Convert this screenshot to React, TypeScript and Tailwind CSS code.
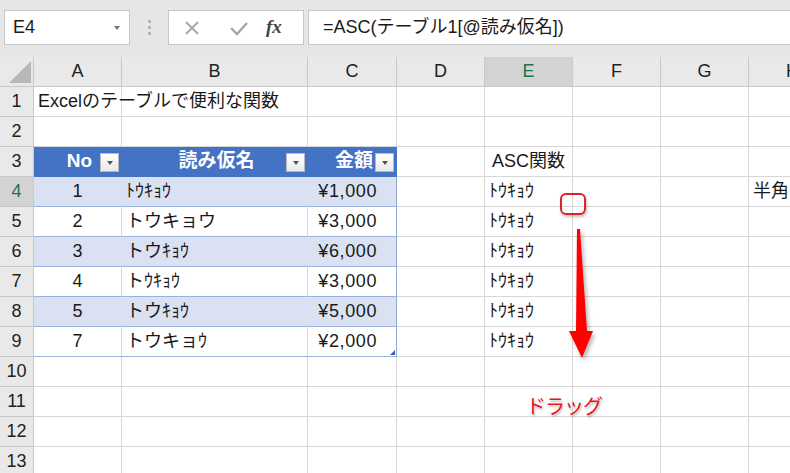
import React from "react";

const FONT = "font-['Liberation_Sans','Noto_Sans_CJK_JP',sans-serif]";
const GRID = "grid grid-cols-[34px_88px_186px_89px_88px_88px_88px_88px_88px]";
const COLS = ["A", "B", "C", "D", "E", "F", "G", "H"];

type Cell = { text?: string; align?: "left" | "center" | "right" };

const data: Record<number, Cell[]> = {
  1: [{ text: "Excelのテーブルで便利な関数" }],
  3: [{}, {}, {}, {}, { text: "ASC関数", align: "center" }],
  4: [{ text: "1", align: "center" }, { text: "ﾄｳｷｮｳ" }, { text: "¥1,000", align: "right" }, {}, { text: "ﾄｳｷｮｳ" }, {}, {}, { text: "半角" }],
  5: [{ text: "2", align: "center" }, { text: "トウキョウ" }, { text: "¥3,000", align: "right" }, {}, { text: "ﾄｳｷｮｳ" }],
  6: [{ text: "3", align: "center" }, { text: "トウｷｮｳ" }, { text: "¥6,000", align: "right" }, {}, { text: "ﾄｳｷｮｳ" }],
  7: [{ text: "4", align: "center" }, { text: "トｳｷｮｳ" }, { text: "¥3,000", align: "right" }, {}, { text: "ﾄｳｷｮｳ" }],
  8: [{ text: "5", align: "center" }, { text: "トウｷｮｳ" }, { text: "¥5,000", align: "right" }, {}, { text: "ﾄｳｷｮｳ" }],
  9: [{ text: "7", align: "center" }, { text: "トウキョｳ" }, { text: "¥2,000", align: "right" }, {}, { text: "ﾄｳｷｮｳ" }],
};

function FilterButton() {
  return (
    <span className="absolute right-[2px] top-[6px] flex h-[19px] w-[19px] items-center justify-center border border-[#b9b9b9] bg-gradient-to-b from-white to-[#e9e9e9]">
      <span className="h-0 w-0 border-x-[3.5px] border-t-[4px] border-x-transparent border-t-[#555]" />
    </span>
  );
}

function Row({ n }: { n: number }) {
  const cells = data[n] ?? [];
  const inTable = n >= 3 && n <= 9;
  const band = n === 4 || n === 6 || n === 8;
  return (
    <div className={`${GRID} h-[30px]`}>
      <div
        className={`flex items-center justify-center border-b border-r border-[#c8c8c8] ${
          n === 4 ? "bg-[#d3d3d3] text-[#217346]" : "bg-[#e9e9e9] text-[#222]"
        }`}
      >
        {n}
      </div>
      {COLS.map((c, i) => {
        const cell = cells[i] ?? {};
        const isTbl = inTable && i <= 2;
        let cls = "border-b border-r border-[#d6d6d6]";
        if (isTbl && n === 3) cls = "bg-[#4472c4] border-b border-b-[#4472c4] border-r border-r-[#4472c4] text-white font-bold text-[19px]";
        else if (isTbl) {
          cls = `border-b border-b-[#9bb2dd] border-r ${
            i === 2 ? "border-r-[#8ea9db]" : band ? "border-r-[#d9e1f2]" : "border-r-[#d6d6d6]"
          } ${band ? "bg-[#d9e1f2]" : ""}`;
        }
        const align =
          cell.align === "center"
            ? "justify-center"
            : cell.align === "right"
              ? "justify-end pr-[19px] tracking-[0.6px]"
              : "justify-start pl-[4px]";
        return (
          <div key={c} className={`relative flex items-center overflow-visible whitespace-nowrap ${cls} ${align}`}>
            {isTbl && n === 3 ? (
              <>
                {i === 0 && <span className="w-full text-center">No</span>}
                {i === 1 && <span className="w-full text-center">読み仮名</span>}
                {i === 2 && <span className="w-full pr-[23px] text-right">金額</span>}
                <FilterButton />
              </>
            ) : (
              <span className={n === 1 ? "relative z-10" : ""}>{cell.text}</span>
            )}
            {isTbl && n === 9 && i === 2 && (
              <span className="absolute bottom-[1px] right-[1px] h-0 w-0 border-l-[5px] border-t-[5px] border-r-[0px] border-l-transparent border-t-transparent border-b-[0px] border-r-[#3b5ca8] [border-right-width:5px] [border-right-style:solid]" />
            )}
          </div>
        );
      })}
    </div>
  );
}

export default function App() {
  return (
    <div className={`relative h-[473px] w-[790px] overflow-hidden bg-white text-[18px] text-[#1a1a1a] ${FONT}`}>
      {/* formula bar */}
      <div className="flex h-[57px] items-start bg-[#e6e6e6] pt-[10px]">
        <div className="ml-[4px] flex h-[35px] w-[126px] items-center justify-between border border-[#c6c6c6] bg-white pl-[8px] pr-[9px]">
          <span>E4</span>
          <span className="h-0 w-0 border-x-[3.5px] border-t-[4px] border-x-transparent border-t-[#777]" />
        </div>
        <div className="flex h-[35px] w-[38px] flex-col items-center justify-center gap-[3px]">
          <span className="h-[3px] w-[3px] bg-[#b5b5b5]" />
          <span className="h-[3px] w-[3px] bg-[#b5b5b5]" />
          <span className="h-[3px] w-[3px] bg-[#b5b5b5]" />
        </div>
        <div className="flex h-[35px] w-[136px] items-center border border-[#c6c6c6] bg-white">
          <svg width="46" height="20" viewBox="0 0 46 20" className="ml-[1px]">
            <path d="M16 4 L28 16 M28 4 L16 16" stroke="#a6a6a6" strokeWidth="1.8" />
          </svg>
          <svg width="46" height="20" viewBox="0 0 46 20">
            <path d="M15 10 L21 16 L31 5" stroke="#a6a6a6" strokeWidth="2.4" fill="none" />
          </svg>
          <span className="ml-[4px] font-['Liberation_Serif',serif] text-[19px] font-bold italic text-[#444]">fx</span>
        </div>
        <div className="ml-[4px] flex h-[35px] flex-1 items-center border border-r-0 border-[#c6c6c6] bg-white pl-[14px]">
          =ASC(テーブル1[@読み仮名])
        </div>
      </div>

      {/* column header */}
      <div className={`${GRID} h-[30px]`}>
        <div className="relative border-b border-r border-[#c8c8c8] bg-[#e9e9e9]">
          <svg width="22" height="22" viewBox="0 0 22 22" className="absolute bottom-[3px] right-[2px]">
            <polygon points="22,0 22,22 0,22" fill="#b8b8b8" />
          </svg>
        </div>
        {COLS.map((c) => (
          <div
            key={c}
            className={`flex items-center justify-center border-b border-r border-[#c8c8c8] ${
              c === "E" ? "bg-[#d3d3d3] text-[#217346]" : "bg-[#e9e9e9] text-[#222]"
            }`}
          >
            {c}
          </div>
        ))}
      </div>

      {/* rows */}
      {[1, 2, 3, 4, 5, 6, 7, 8, 9, 10, 11, 12, 13].map((n) => (
        <Row key={n} n={n} />
      ))}

      {/* annotations */}
      <div className="absolute left-[560px] top-[193px] h-[22px] w-[26px] rounded-[6px] border-2 border-[#e0202a] shadow-[1px_2px_3px_rgba(0,0,0,0.25)]" />
      <svg className="absolute left-0 top-0" width="790" height="473" style={{ pointerEvents: "none" }}>
        <defs>
          <filter id="sh" x="-50%" y="-10%" width="200%" height="130%">
            <feDropShadow dx="2" dy="3" stdDeviation="2" floodColor="#000" floodOpacity="0.3" />
          </filter>
        </defs>
        <polygon points="577,229 580,229 587,331 593,331 582,358 569,331 576,331" fill="#ff0000" filter="url(#sh)" />
      </svg>
      <div className="absolute left-[526px] top-[392px] text-[20px] tracking-[-1px] text-[#e8141c] [text-shadow:1px_2px_2px_rgba(0,0,0,0.25)]">
        ドラッグ
      </div>
    </div>
  );
}
